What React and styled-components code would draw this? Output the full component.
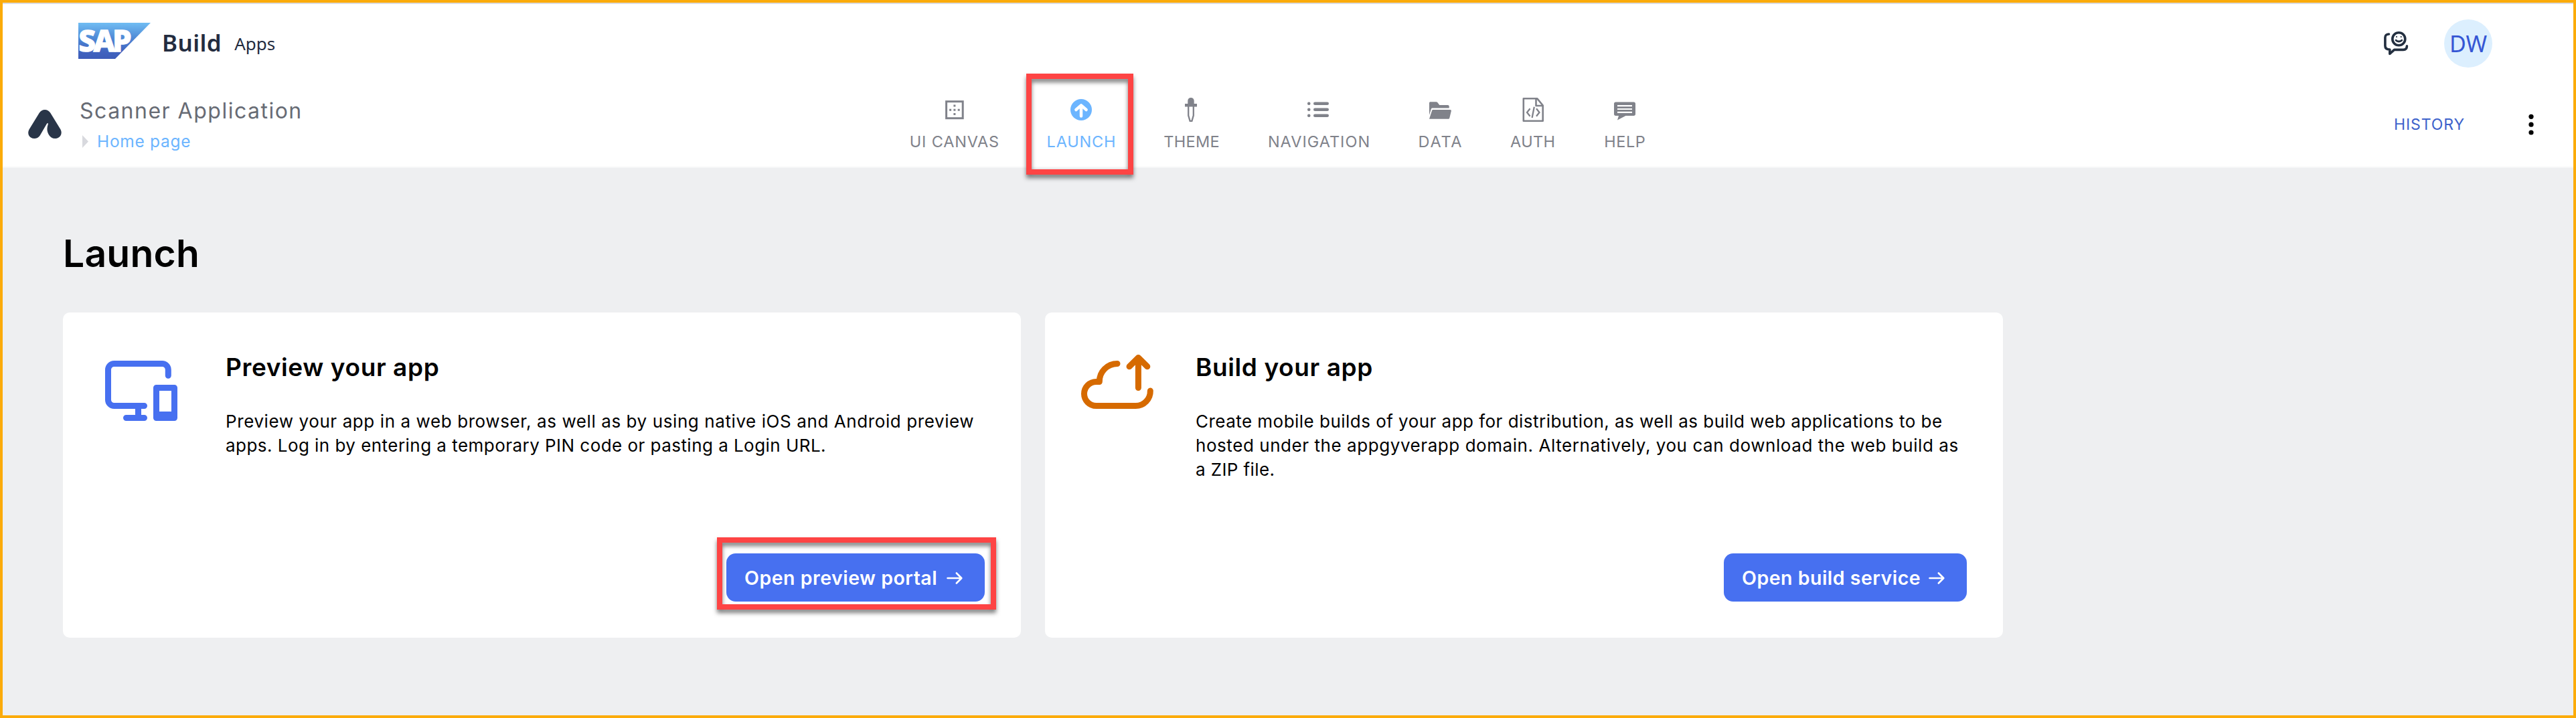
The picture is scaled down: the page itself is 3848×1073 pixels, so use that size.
import React from "react";
import styled, { createGlobalStyle } from "styled-components";

const GlobalStyle = createGlobalStyle`
  *, *::before, *::after { box-sizing: border-box; }
  body { margin: 0; background: #eeeff1; font-family: Inter, "Open Sans", sans-serif; }
  svg { display: block; flex: none; overflow: visible; }
`;

const Shell = styled.div`
  height: 1073px;
  border: 4px solid #fbab0a;
  background: #eeeff1;
  display: flex;
  flex-direction: column;
`;

const Header = styled.header`
  height: 247px;
  flex: none;
  display: flex;
  flex-direction: column;
  background: #fff;
  border-top: 2px solid #dbdce0;
  border-bottom: 2px solid #f6f7f8;
`;

const TopBar = styled.div`
  height: 110px;
  display: flex;
  align-items: center;
  justify-content: space-between;
  padding: 0 121px 0 113px;
`;

const Brand = styled.div`
  display: flex;
  align-items: center;
`;

const ProductName = styled.span`
  margin: 5px 0 0 17px;
  font: 600 35px/40px "Noto Sans", sans-serif;
  letter-spacing: 0.4px;
  color: #232c3f;
`;

const ProductArea = styled.span`
  margin: 7px 0 0 19px;
  font: 400 26px/40px "Noto Sans", sans-serif;
  color: #232c3f;
`;

const UserArea = styled.div`
  display: flex;
  align-items: center;
  gap: 54px;
  padding-top: 8px;
`;

const Avatar = styled.div`
  width: 72px;
  height: 72px;
  border-radius: 50%;
  display: grid;
  place-items: center;
  background: #dceffe;
  color: #3556d4;
  font: 400 34px/40px "Noto Sans", sans-serif;
`;

const ToolBar = styled.div`
  flex: 1;
  display: flex;
  align-items: center;
  padding: 6px 59px 0 38px;
`;

const AppInfo = styled.div`
  flex: 0 0 1318px;
  display: flex;
  align-items: center;
  gap: 27px;
`;

const Titles = styled.div`
  display: flex;
  flex-direction: column;
  gap: 10px;
  padding-top: 1px;
`;

const AppTitle = styled.div`
  font-size: 32px;
  line-height: 40px;
  letter-spacing: 1.5px;
  color: #676b74;
`;

const Crumb = styled.div`
  display: flex;
  align-items: center;
  gap: 13px;
  padding-left: 4px;
  font-size: 24.5px;
  line-height: 30px;
  letter-spacing: 0.7px;
  color: #6cb5ff;
`;

const Nav = styled.nav`
  display: flex;
  gap: 74px;
`;

const NavItem = styled.div`
  position: relative;
  width: ${(p) => p.$width}px;
  display: flex;
  flex-direction: column;
  align-items: center;
  gap: 16px;
  color: ${(p) => (p.$active ? "#6cb5ff" : "#80828a")};
`;

const NavLabel = styled.span`
  font-size: 23.5px;
  line-height: 28px;
  white-space: nowrap;
  letter-spacing: ${(p) => p.$track}px;
  margin-right: -${(p) => p.$track}px;
`;

const Highlight = styled.span`
  position: absolute;
  left: ${(p) => p.$left}px;
  top: ${(p) => p.$top}px;
  width: ${(p) => p.$width}px;
  height: ${(p) => p.$height}px;
  border: 8px solid #fe4444;
  filter: drop-shadow(0 5px 3px rgba(0, 0, 0, 0.5));
  pointer-events: none;
`;

const ToolActions = styled.div`
  margin-left: auto;
  display: flex;
  align-items: center;
  gap: 94px;
`;

const HistoryLink = styled.span`
  width: 107px;
  padding-top: 1px;
  font-size: 23px;
  line-height: 30px;
  letter-spacing: 0.9px;
  color: #3d62cb;
`;

const Main = styled.main`
  padding: 93px 90px 0;
`;

const PageTitle = styled.h1`
  margin: 0 0 53px;
  font-size: 57px;
  line-height: 70px;
  font-weight: 600;
  letter-spacing: 0.2px;
  color: #000;
`;

const Cards = styled.div`
  display: flex;
  gap: 36px;
`;

const Card = styled.section`
  width: 1431px;
  height: 486px;
  display: flex;
  padding: 59px 54px 54px ${(p) => p.$inset}px;
  border-radius: 10px;
  background: #fff;
`;

const CardIcon = styled.div`
  flex: 0 0 ${(p) => p.$width}px;
  margin-top: -16px;
`;

const CardBody = styled.div`
  flex: 1;
  display: flex;
  flex-direction: column;
  color: #000;
`;

const CardTitle = styled.h2`
  margin: 0 0 40px;
  font-size: 37px;
  line-height: 46px;
  font-weight: 600;
  letter-spacing: 0.6px;
`;

const CardText = styled.p`
  margin: 0;
  font-size: 26px;
  line-height: 36px;
`;

const Line = styled.span`
  display: block;
  white-space: nowrap;
  letter-spacing: ${(p) => p.$track}px;
`;

const ActionSlot = styled.div`
  position: relative;
  margin-top: auto;
  align-self: flex-end;
`;

const Button = styled.button`
  width: ${(p) => p.$width}px;
  height: 72px;
  display: flex;
  align-items: center;
  justify-content: space-between;
  padding: 1px 33px 0 27px;
  border: 0;
  border-radius: 14px;
  background: #4770f0;
  color: #fff;
  font: 600 28.5px/36px Inter, sans-serif;
  letter-spacing: 0.5px;
  white-space: nowrap;
`;

const SapLogo = () => (
  <svg width="108" height="54" viewBox="0 0 108 54">
    <defs>
      <linearGradient id="sap" x1="0" y1="0" x2="0" y2="1">
        <stop offset="0" stopColor="#70bdf3" />
        <stop offset="0.45" stopColor="#4d86d4" />
        <stop offset="0.8" stopColor="#4063bf" />
        <stop offset="1" stopColor="#3d5cb9" />
      </linearGradient>
    </defs>
    <path d="M0 0H108L55 54H0Z" fill="url(#sap)" />
    <text x="0.5" y="43" fill="#fff" stroke="#fff" strokeWidth="1.6" fontFamily="Noto Sans" fontWeight="800" fontSize="45" textLength="79" lengthAdjust="spacing">SAP</text>
  </svg>
);

const BuildMark = () => (
  <svg width="50" height="43" viewBox="0 0 50 43" fill="#293548">
    <path d="M16.7 4.8C20.5-1.6 29.5-1.6 33.3 4.8L48.5 29.5C52 36 47.5 43 40.5 43C36 43 33 41 31 37.5C28.8 33.5 27.8 30 29 24.5L29.8 21.5C30 19.8 29 19.5 28 20.8L17.7 38.6C15.6 42 12.5 43 9.3 43C2 43-2 36 1.5 29.5Z" />
  </svg>
);

const FeedbackIcon = () => (
  <svg width="36" height="36" viewBox="0 0 36 36" fill="none" stroke="#232f40" strokeWidth="3.6" strokeLinecap="round" strokeLinejoin="round">
    <circle cx="22.3" cy="11.3" r="9.5" />
    <circle cx="19" cy="8" r="1.1" fill="#232f40" stroke="none" />
    <circle cx="25.7" cy="8" r="1.1" fill="#232f40" stroke="none" />
    <path d="M18 13.2C20 15.6 24.8 15.6 26.8 13.2" strokeWidth="2.8" />
    <path d="M7.5 4C4 4 1.9 6 1.9 9V21.5C1.9 25 4 27 8.8 27V33.5L15.5 27.4H29C32.5 27.4 34.4 25.5 34.4 21.8" />
  </svg>
);

const KebabIcon = () => (
  <svg width="8" height="32" viewBox="0 0 8 32" fill="#000">
    <circle cx="4" cy="4.3" r="3.6" />
    <circle cx="4" cy="16.2" r="3.6" />
    <circle cx="4" cy="28" r="3.6" />
  </svg>
);

const CrumbArrow = () => (
  <svg width="9" height="19" viewBox="0 0 9 19" fill="#d8d9de">
    <path d="M0 0L9 9.5L0 19Z" />
  </svg>
);

const NavGlyph = ({ children }) => (
  <svg width="40" height="36" viewBox="0 0 40 36" fill="currentColor">
    {children}
  </svg>
);

const CanvasIcon = () => (
  <NavGlyph>
    <rect x="7.6" y="5.7" width="24.6" height="25" fill="none" stroke="currentColor" strokeWidth="3" />
    <path d="M18.4 10.5h3v3h-3zM18.4 16.7h3v3h-3zM18.4 22.9h3v3h-3zM12.1 16.7h3v3h-3zM24.7 16.7h3v3h-3z" />
  </NavGlyph>
);

const LaunchIcon = () => (
  <NavGlyph>
    <circle cx="20" cy="18" r="16" />
    <path d="M20 27.6V12M12.4 18L20 11.4L27.6 18" fill="none" stroke="#fff" strokeWidth="4.5" strokeLinecap="round" strokeLinejoin="round" />
  </NavGlyph>
);

const ThemeIcon = () => (
  <NavGlyph>
    <path d="M14.3 10V4.6C14.3 1.8 16.3 0 19 0s4.7 1.8 4.7 4.6V10zM10 9h18v4.4H10z" />
    <path d="M15.2 13V26.5L17.6 34.8H20.4L22.8 26.5V13" fill="none" stroke="currentColor" strokeWidth="2.3" />
  </NavGlyph>
);

const ListIcon = () => (
  <NavGlyph>
    {[8.7, 17.7, 26.7].map((y) => (
      <g key={y}>
        <rect x="3" y={y - 2.2} width="4.5" height="4.4" rx="2" />
        <rect x="12" y={y - 2.3} width="23" height="4.6" rx="2.3" />
      </g>
    ))}
  </NavGlyph>
);

const FolderIcon = () => (
  <NavGlyph>
    <path d="M4 26V8C4 6.8 4.8 6.3 5.8 6.3H14.5C15.6 6.3 16.3 7 17 8L19.3 11H31.5C33 11 33.7 11.8 33.7 13V15.4H9C7.6 15.4 7 16 6.7 17.2Z" />
    <path d="M9.8 18H35C36.5 18 37.1 18.8 36.8 20L34.3 30.2C34 31.3 33.4 31.8 32.2 31.8H4L8 19.5C8.4 18.4 8.8 18 9.8 18Z" />
  </NavGlyph>
);

const AuthIcon = () => (
  <NavGlyph>
    <path d="M5.8 1.3H26.3L34.7 11.5V34.7H5.8Z M24.5 2V12H34.5" fill="none" stroke="currentColor" strokeWidth="2.6" strokeLinejoin="round" />
    <path d="M15.6 16.3L11 22L15.6 27.8M25 16.3L29.5 22L25 27.8M21.8 13.8L18.6 30" fill="none" stroke="currentColor" strokeWidth="2.3" />
  </NavGlyph>
);

const HelpIcon = () => (
  <NavGlyph>
    <path d="M6.5 6.5H33.5C35 6.5 36 7.5 36 9V24.5C36 26 35 27 33.5 27H21.5L9 33.5L11 27H6.5C5 27 4 26 4 24.5V9C4 7.5 5 6.5 6.5 6.5Z" />
    <path d="M9 12.2H31M9 17H31M9 21.8H31" stroke="#fff" strokeWidth="2.2" />
  </NavGlyph>
);

const DevicesIcon = () => (
  <svg width="130" height="140" viewBox="0 0 130 140" fill="none" stroke="#4770f0" strokeWidth="9" strokeLinecap="round">
    <path d="M111.3 51.2V42.5A9 9 0 0 0 102.3 33.5H30.5A9 9 0 0 0 21.5 42.5V87.5A9 9 0 0 0 30.5 96.5H75.5" />
    <path d="M66.5 98V113M48.5 114.5H75.5" />
    <rect x="93.5" y="69.5" width="27" height="40" strokeLinejoin="round" />
    <rect x="93.5" y="110" width="27" height="4.5" fill="#4770f0" strokeLinejoin="round" />
  </svg>
);

const CloudIcon = () => (
  <svg width="130" height="140" viewBox="0 0 130 140" fill="none" stroke="#d66a00" strokeWidth="9" strokeLinecap="round" strokeLinejoin="round">
    <path d="M74 33.5A26.7 26.7 0 0 0 47.3 60.5H42.5A18 18 0 0 0 42.5 96.5H101.5A21.8 21.8 0 0 0 123.3 74" />
    <path d="M105.4 69.5V26M92 37.8L105.4 24.5L118.8 37.8" />
  </svg>
);

const ArrowIcon = () => (
  <svg width="24" height="18" viewBox="0 0 24 18" fill="none" stroke="#fff" strokeWidth="2.6" strokeLinecap="round" strokeLinejoin="round">
    <path d="M1.5 9H22M14.8 1.5L22.3 9L14.8 16.5" />
  </svg>
);

const NAV_ITEMS = [
  { label: "UI CANVAS", Icon: CanvasIcon, width: 131, track: 0.8 },
  { label: "LAUNCH", Icon: LaunchIcon, width: 100, track: 0.8, active: true },
  { label: "THEME", Icon: ThemeIcon, width: 82, track: 0.3 },
  { label: "NAVIGATION", Icon: ListIcon, width: 150, track: 1 },
  { label: "DATA", Icon: FolderIcon, width: 64, track: 1.8 },
  { label: "AUTH", Icon: AuthIcon, width: 65, track: 0.3 },
  { label: "HELP", Icon: HelpIcon, width: 62, track: 0.5 },
];

const CARDS = [
  {
    title: "Preview your app",
    Icon: DevicesIcon,
    inset: 46,
    iconWidth: 197,
    lines: [
      { text: "Preview your app in a web browser, as well as by using native iOS and Android preview", track: 0.59 },
      { text: "apps. Log in by entering a temporary PIN code or pasting a Login URL.", track: 0.46 },
    ],
    action: "Open preview portal",
    buttonWidth: 386,
    highlighted: true,
  },
  {
    title: "Build your app",
    Icon: CloudIcon,
    inset: 34,
    iconWidth: 191,
    lines: [
      { text: "Create mobile builds of your app for distribution, as well as build web applications to be", track: 0.47 },
      { text: "hosted under the appgyverapp domain. Alternatively, you can download the web build as", track: 0.56 },
      { text: "a ZIP file.", track: 0.4 },
    ],
    action: "Open build service",
    buttonWidth: 363,
  },
];

export default function App() {
  return (
    <Shell>
      <GlobalStyle />
      <Header>
        <TopBar>
          <Brand>
            <SapLogo />
            <ProductName>Build</ProductName>
            <ProductArea>Apps</ProductArea>
          </Brand>
          <UserArea>
            <FeedbackIcon />
            <Avatar>DW</Avatar>
          </UserArea>
        </TopBar>
        <ToolBar>
          <AppInfo>
            <BuildMark />
            <Titles>
              <AppTitle>Scanner Application</AppTitle>
              <Crumb>
                <CrumbArrow />
                Home page
              </Crumb>
            </Titles>
          </AppInfo>
          <Nav>
            {NAV_ITEMS.map(({ label, Icon, width, track, active }) => (
              <NavItem key={label} $width={width} $active={active}>
                <Icon />
                <NavLabel $track={track}>{label}</NavLabel>
                {active && <Highlight $left={-32} $top={-36} $width={160} $height={151} />}
              </NavItem>
            ))}
          </Nav>
          <ToolActions>
            <HistoryLink>HISTORY</HistoryLink>
            <KebabIcon />
          </ToolActions>
        </ToolBar>
      </Header>
      <Main>
        <PageTitle>Launch</PageTitle>
        <Cards>
          {CARDS.map(({ title, Icon, inset, iconWidth, lines, action, buttonWidth, highlighted }) => (
            <Card key={title} $inset={inset}>
              <CardIcon $width={iconWidth}>
                <Icon />
              </CardIcon>
              <CardBody>
                <CardTitle>{title}</CardTitle>
                <CardText>
                  {lines.map(({ text, track }) => (
                    <Line key={text} $track={track}>{text} </Line>
                  ))}
                </CardText>
                <ActionSlot>
                  <Button $width={buttonWidth}>
                    {action}
                    <ArrowIcon />
                  </Button>
                  {highlighted && <Highlight $left={-14} $top={-24} $width={417} $height={108} />}
                </ActionSlot>
              </CardBody>
            </Card>
          ))}
        </Cards>
      </Main>
    </Shell>
  );
}
